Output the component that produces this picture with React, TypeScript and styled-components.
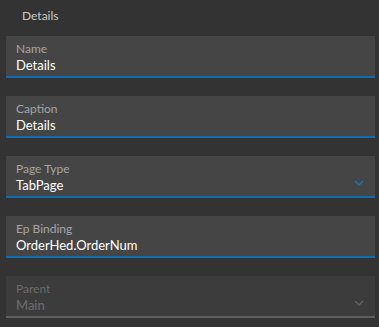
import styled, { createGlobalStyle } from "styled-components";

const GlobalStyle = createGlobalStyle`
  html, body {
    margin: 0;
    padding: 0;
    background: #333333;
  }
  body {
    font-family: Lato, "Noto Sans", sans-serif;
  }
`;

type Field = {
  label: string;
  value: string;
  select?: boolean;
  disabled?: boolean;
};

const fields: Field[] = [
  { label: "Name", value: "Details" },
  { label: "Caption", value: "Details" },
  { label: "Page Type", value: "TabPage", select: true },
  { label: "Ep Binding", value: "OrderHed.OrderNum" },
  { label: "Parent", value: "Main", select: true, disabled: true },
];

const Chevron = ({ color }: { color: string }) => (
  <svg width="10" height="6" viewBox="0 0 10 6" fill="none">
    <path d="M1 1l4 4 4-4" stroke={color} strokeWidth="1.6" />
  </svg>
);

const App = () => {
  return (
    <Panel>
      <GlobalStyle />
      <Header>Details</Header>
      <List>
        {fields.map((f) => (
          <Box key={f.label} disabled={f.disabled}>
            <Label disabled={f.disabled}>{f.label}</Label>
            <Value disabled={f.disabled}>{f.value}</Value>
            {f.select && (
              <Arrow>
                <Chevron color={f.disabled ? "#5e5e5e" : "#1f6fb2"} />
              </Arrow>
            )}
          </Box>
        ))}
      </List>
    </Panel>
  );
};

export default App;

const Panel = styled.div`
  width: 379px;
  height: 327px;
  background: #333333;
  padding: 0 4px 0 6px;
  box-sizing: border-box;
`;

const Header = styled.div`
  height: 36px;
  padding-left: 16px;
  line-height: 31px;
  font-size: 12px;
  color: #c9c9c9;
`;

const List = styled.div`
  display: flex;
  flex-direction: column;
  gap: 18px;
`;

const Box = styled.div<{ disabled?: boolean }>`
  position: relative;
  height: 42px;
  box-sizing: border-box;
  background: ${({ disabled }) => (disabled ? "#3c3c3c" : "#454545")};
  border-bottom: 2px solid ${({ disabled }) => (disabled ? "#5f5f5f" : "#0f6cb0")};
  padding: 6px 10px 0 10px;
`;

const Label = styled.div<{ disabled?: boolean }>`
  font-size: 12px;
  line-height: 14px;
  color: ${({ disabled }) => (disabled ? "#6a6a6a" : "#a5a5a5")};
`;

const Value = styled.div<{ disabled?: boolean }>`
  font-size: 13px;
  line-height: 19px;
  font-weight: 400;
  color: ${({ disabled }) => (disabled ? "#6e6e6e" : "#ffffff")};
`;

const Arrow = styled.div`
  position: absolute;
  right: 11px;
  top: 24px;
  display: flex;
`;
